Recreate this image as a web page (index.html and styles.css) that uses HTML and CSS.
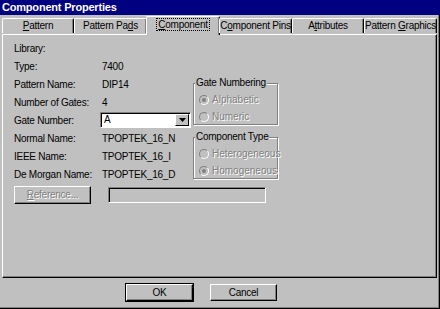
FILE: index.html
```html
<!DOCTYPE html>
<html lang="en">
<head>
<meta charset="UTF-8" />
<title>Component Properties</title>
<link rel="stylesheet" href="styles.css">
</head>
<body>
<div class="window">
  <div class="titlebar">Component Properties</div>
  <div class="tabs">
    <div class="tab"><u>P</u>attern</div>
    <div class="tab wide">Pattern Pa<u>d</u>s</div>
    <div class="tab active"><span class="focus"><u>C</u>omponent</span></div>
    <div class="tab wide">C<u>o</u>mponent Pins</div>
    <div class="tab">A<u>t</u>tributes</div>
    <div class="tab wide">Pattern <u>G</u>raphics</div>
  </div>
  <div class="panel">
    <div class="cols">
      <div class="fields">
        <div class="row"><span class="lbl">Library:</span><span></span></div>
        <div class="row"><span class="lbl">Type:</span><span>7400</span></div>
        <div class="row"><span class="lbl">Pattern Name:</span><span>DIP14</span></div>
        <div class="row"><span class="lbl">Number of Gates:</span><span>4</span></div>
        <div class="row"><span class="lbl">Gate Number:</span>
          <div class="combo"><span class="combo-text">A</span><span class="combo-btn"><svg width="7" height="4" viewBox="0 0 7 4"><path d="M0 0h7L3.5 4z" fill="#000"/></svg></span></div>
        </div>
        <div class="row"><span class="lbl">Normal Name:</span><span>TPOPTEK_16_N</span></div>
        <div class="row"><span class="lbl">IEEE Name:</span><span>TPOPTEK_16_I</span></div>
        <div class="row"><span class="lbl">De Morgan Name:</span><span>TPOPTEK_16_D</span></div>
      </div>
      <div class="groups">
        <div class="group">
          <span class="legend">Gate Numbering</span>
          <div class="radio"><span class="dot on"></span>Alphabetic</div>
          <div class="radio"><span class="dot"></span>Numeric</div>
        </div>
        <div class="group">
          <span class="legend">Component Type</span>
          <div class="radio"><span class="dot"></span>Heterogeneous</div>
          <div class="radio"><span class="dot on"></span>Homogeneous</div>
        </div>
      </div>
    </div>
    <div class="refrow">
      <div class="btn disabled"><u>R</u>eference...</div>
      <div class="textbox"></div>
    </div>
  </div>
  <div class="footer">
    <div class="btn default">OK</div>
    <div class="btn">Cancel</div>
  </div>
</div>
</body>
</html>
```

FILE: styles.css
```css
html, body {
  margin: 0;
  padding: 0;
}

body {
  width: 440px;
  height: 309px;
  background: #c0c0c0;
  font-family: "Liberation Sans", Arial, sans-serif;
  font-size: 10px;
  letter-spacing: -0.25px;
  color: #000;
  overflow: hidden;
  white-space: nowrap;
}

.window {
  width: 440px;
  height: 309px;
  box-sizing: border-box;
  border-right: 1px solid #000;
  border-bottom: 1px solid #000;
  box-shadow: inset -1px -1px 0 #808080;
  display: flex;
  flex-direction: column;
}

.titlebar {
  height: 15px;
  background: #000080;
  color: #fff;
  font-weight: bold;
  font-size: 11px;
  letter-spacing: -0.2px;
  line-height: 15px;
  padding-left: 2px;
  margin-right: -1px;
}

.tabs {
  display: flex;
  margin: 2px 2px 0 2px;
  height: 17px;
  align-items: flex-end;
  position: relative;
  z-index: 1;
}

.tab {
  width: 72px;
  height: 15px;
  box-sizing: border-box;
  border: 1px solid #fff;
  border-right-color: #000;
  border-bottom: none;
  border-radius: 2px 2px 0 0;
  box-shadow: inset -1px 0 0 #808080;
  text-align: center;
  line-height: 14px;
  margin-bottom: 1px;
}

.tab.wide {
  width: 73px;
}

.tab.active {
  height: 19px;
  margin: 0 -1px -1px -1px;
  width: 74px;
  background: #c0c0c0;
  padding-top: 1px;
}

.focus {
  outline: 1px dotted #000;
  padding: 0 1px;
}

.panel {
  margin: 0 2px;
  height: 244px;
  box-sizing: border-box;
  border: 1px solid #fff;
  border-right-color: #000;
  border-bottom-color: #000;
  box-shadow: inset -1px -1px 0 #808080;
  padding: 4px 0 0 11px;
}

.cols {
  display: flex;
}

.fields {
  width: 179px;
}

.row {
  display: grid;
  grid-template-columns: 88px 1fr;
  height: 18px;
  align-items: center;
}

.combo {
  width: 91px;
  height: 16px;
  box-sizing: border-box;
  background: #fff;
  border: 1px solid #808080;
  border-right-color: #fff;
  border-bottom-color: #fff;
  box-shadow: inset 1px 1px 0 #000;
  display: flex;
  justify-content: space-between;
  margin-left: -2px;
}

.combo-text {
  padding: 1px 0 0 3px;
}

.combo-btn {
  width: 14px;
  height: 12px;
  margin: 1px 1px 0 0;
  background: #c0c0c0;
  box-sizing: border-box;
  border: 1px solid #fff;
  border-right-color: #000;
  border-bottom-color: #000;
  display: flex;
  align-items: center;
  justify-content: center;
}

.groups {
  display: flex;
  flex-direction: column;
  gap: 12px;
  padding-top: 44px;
}

.group {
  width: 85px;
  height: 42px;
  box-sizing: border-box;
  padding: 7px 0 0 5px;
  border: 1px solid #808080;
  box-shadow: 1px 1px 0 #fff, inset 1px 1px 0 #fff;
  position: relative;
}

.legend {
  position: absolute;
  left: 1px;
  top: -7px;
  padding: 0 1px;
  background: #c0c0c0;
  line-height: 12px;
}

.radio {
  display: flex;
  align-items: center;
  gap: 3px;
  height: 17px;
  color: #808080;
  letter-spacing: 0;
  text-shadow: 1px 1px 0 #fff;
}

.dot {
  flex-shrink: 0;
  width: 10px;
  height: 10px;
  box-sizing: border-box;
  border-radius: 50%;
  border: 1px solid #808080;
  border-right-color: #fff;
  border-bottom-color: #fff;
  background: #c0c0c0;
  position: relative;
}

.dot.on::after {
  content: "";
  position: absolute;
  left: 2px;
  top: 2px;
  width: 4px;
  height: 4px;
  border-radius: 50%;
  background: #808080;
}

.refrow {
  display: flex;
  align-items: center;
  gap: 17px;
  margin-top: 3px;
}

.btn {
  width: 77px;
  height: 18px;
  box-sizing: border-box;
  border: 1px solid #fff;
  border-right-color: #000;
  border-bottom-color: #000;
  box-shadow: inset -1px -1px 0 #808080;
  text-align: center;
  line-height: 16px;
}

.btn.disabled {
  color: #808080;
  text-shadow: 1px 1px 0 #fff;
}

.textbox {
  width: 158px;
  height: 16px;
  box-sizing: border-box;
  border: 1px solid #808080;
  border-right-color: #fff;
  border-bottom-color: #fff;
  box-shadow: inset 1px 1px 0 #000;
  background: #c0c0c0;
}

.footer {
  display: flex;
  gap: 17px;
  padding-top: 6px;
  padding-left: 126px;
}

.footer .btn {
  width: 67px;
  height: 17px;
}

.btn.default {
  outline: 1px solid #000;
}
```
